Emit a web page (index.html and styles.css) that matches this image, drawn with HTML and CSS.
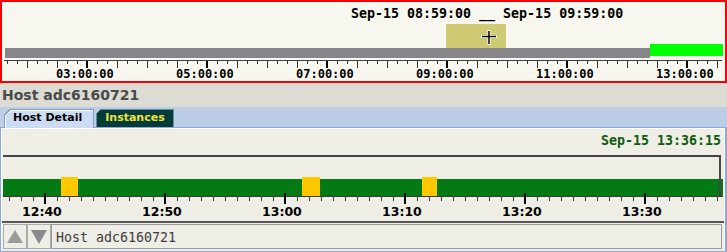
FILE: index.html
```html
<!DOCTYPE html>
<html lang="en">
<head>
    <meta charset="UTF-8">
    <title>Host adc6160721</title>
    <link rel="stylesheet" href="styles.css">
</head>
<body>
    <div class="overview">
        <div class="overview-plot">
            <div class="range">Sep-15 08:59:00 __ Sep-15 09:59:00</div>
            <div class="window"></div>
            <div class="span span-idle"></div>
            <div class="span span-live"></div>
            <svg class="cursor" width="20" height="20" viewBox="0 0 20 20">
                <path d="M1 7.5h16M9 1v15" stroke="#fff" stroke-width="3" fill="none"/>
                <path d="M2 7.5h14M9 2v13" stroke="#000" stroke-width="1.5" fill="none"/>
            </svg>
        </div>
        <div class="ticks ticks-hours"></div>
        <div class="tick-labels hour-labels">
            <span>03:00:00</span>
            <span>05:00:00</span>
            <span>07:00:00</span>
            <span>09:00:00</span>
            <span>11:00:00</span>
            <span>13:00:00</span>
        </div>
    </div>

    <div class="host-title">Host adc6160721</div>

    <div class="tabs">
        <div class="tab tab-active">Host Detail</div>
        <div class="tab tab-instances">Instances</div>
    </div>

    <div class="tab-panel">
        <div class="clock">Sep-15 13:36:15</div>
        <div class="lane">
            <div class="lane-bar"></div>
            <div class="event" style="left:58px; width:17px"></div>
            <div class="event" style="left:299px; width:18px"></div>
            <div class="event" style="left:419px; width:15px"></div>
            <div class="now-line"></div>
        </div>
        <div class="ticks ticks-minutes"></div>
        <div class="tick-labels minute-labels">
            <span>12:40</span>
            <span>12:50</span>
            <span>13:00</span>
            <span>13:10</span>
            <span>13:20</span>
            <span>13:30</span>
        </div>
        <div class="host-nav">
            <button class="nav-btn" type="button">
                <svg width="16" height="13" viewBox="0 0 16 13"><polygon points="8,0 16,13 0,13" fill="#9b9b9b"/></svg>
            </button>
            <button class="nav-btn" type="button">
                <svg width="16" height="14" viewBox="0 0 16 14"><polygon points="0,0 16,0 8,14" fill="#8a8a8a"/></svg>
            </button>
            <div class="host-field">Host adc6160721</div>
        </div>
    </div>
</body>
</html>
```

FILE: styles.css
```css
body {
    margin: 0;
    width: 727px;
    height: 252px;
    overflow: hidden;
    background-color: #dcdcd4;
    font-family: "DejaVu Sans", sans-serif;
}

/* overview strip */
.overview {
    position: relative;
    height: 83px;
    box-sizing: border-box;
    border: 2px solid #ff0000;
    background-color: #f8f7ef;
    overflow: hidden;
}
.overview-plot {
    position: relative;
    height: 58px;
}
.range {
    position: absolute;
    left: 349px;
    top: 4px;
    font: bold 13.3px/16px "DejaVu Sans Mono", monospace;
    color: #000;
    white-space: pre;
}
.window {
    position: absolute;
    left: 444px;
    top: 22px;
    width: 60px;
    height: 24px;
    background-color: #cfca74;
}
.span {
    position: absolute;
}
.span-idle {
    left: 3px;
    top: 46px;
    width: 645px;
    height: 10px;
    background-color: #878589;
}
.span-live {
    left: 648px;
    top: 42px;
    width: 73px;
    height: 12px;
    background-color: #00ff00;
}
.cursor {
    position: absolute;
    left: 478px;
    top: 27px;
}

.ticks-hours {
    margin-left: 2px;
    width: 718px;
    height: 7px;
    border-top: 1px solid #3c3c3c;
    background:
        linear-gradient(90deg, #000 2px, transparent 2px) 82px 0 / 120px 7px repeat-x,
        linear-gradient(90deg, #333 1px, transparent 1px) 23px 0 / 30px 7px repeat-x,
        linear-gradient(90deg, #333 1px, transparent 1px) 3px 0 / 10px 3px repeat-x;
}
.tick-labels {
    display: flex;
    white-space: nowrap;
}
.tick-labels span {
    flex: 0 0 120px;
}
.hour-labels {
    padding-left: 54px;
    font: bold 12px/12px "DejaVu Sans Mono", monospace;
    color: #000;
}

/* host header and tabs */
.host-title {
    height: 24px;
    line-height: 24px;
    padding-left: 2px;
    font-size: 14px;
    font-weight: bold;
    color: #4a4a4a;
}
.tabs {
    display: flex;
    align-items: flex-end;
    height: 20px;
    padding-left: 4px;
    background-color: #bccde6;
}
.tab {
    position: relative;
    border: 1px solid;
    border-bottom: 0;
    font-size: 11px;
    font-weight: bold;
    line-height: 16px;
}
.tab::before {
    content: "";
    position: absolute;
    left: -1px;
    top: -1px;
    width: 7px;
    height: 7px;
}
.tab-active {
    z-index: 1;
    height: 18px;
    margin-bottom: -1px;
    padding: 0 11px 0 8px;
    background-color: #cddcf5;
    border-color: #7f9bcf;
    box-shadow: inset 1px 1px 0 #fff;
    color: #000;
}
.tab-active::before {
    background: linear-gradient(135deg, #bccde6 4.2px, #7f9bcf 4.2px 5.2px, #fff 5.2px 6.2px, transparent 6.2px);
}
.tab-instances {
    height: 17px;
    margin-left: 2px;
    padding: 0 8px;
    background-color: #023c38;
    border-color: #6f8aa0;
    color: #f3e23b;
}
.tab-instances::before {
    background: linear-gradient(135deg, #bccde6 3px, #6f8aa0 3px 4px, transparent 4px);
}

/* tab content */
.tab-panel {
    border: 1px solid #8ea7da;
    border-right-width: 2px;
    padding: 1px 1px 0 1px;
    background-color: #efeee6;
    box-shadow: inset 1px 1px 0 #fff, inset -1px 0 0 #fff;
}
.clock {
    height: 26px;
    box-sizing: border-box;
    padding: 4px 3px 0 0;
    text-align: right;
    font: bold 13.3px/16px "DejaVu Sans Mono", monospace;
    color: #0c5c0c;
}
.lane {
    position: relative;
    height: 39px;
    margin: 0 3px 0 1px;
    border-top: 2px solid #454545;
}
.lane-bar {
    position: absolute;
    left: 0;
    right: -2px;
    top: 22px;
    height: 17px;
    background-color: #047a14;
}
.event {
    position: absolute;
    top: 20px;
    height: 19px;
    background-color: #ffc800;
}
.now-line {
    position: absolute;
    right: 0;
    top: -2px;
    bottom: 0;
    width: 2px;
    background-color: #454545;
}
.ticks-minutes {
    position: relative;
    height: 11px;
    margin: -3px 1px 0 1px;
    background:
        linear-gradient(90deg, #000 2px, transparent 2px) 41px 0 / 120px 11px repeat-x,
        linear-gradient(#3a3a3a, #3a3a3a) 0 3px / 100% 1px no-repeat,
        linear-gradient(90deg, #3a3a3a 1px, transparent 1px) 6px 4px / 12px 4px repeat-x;
}
.minute-labels {
    height: 17px;
    box-sizing: border-box;
    padding: 1px 0 0 20px;
    font: bold 12.5px/14px "DejaVu Sans", sans-serif;
    color: #000;
}

.host-nav {
    display: flex;
    height: 28px;
    border-top: 2px solid #545454;
    padding: 1px 1px 0 1px;
    box-sizing: border-box;
    height: 30px;
}
.nav-btn {
    display: flex;
    align-items: center;
    justify-content: center;
    width: 24px;
    height: 25px;
    padding: 0;
    border: 1px solid #acacac;
    background: transparent;
}
.host-field {
    flex: 1;
    height: 25px;
    box-sizing: border-box;
    margin-right: 1px;
    padding: 3px 0 0 4px;
    border: 1px solid #9c9c9c;
    font: 13.3px/20px "DejaVu Sans Mono", monospace;
    color: #3c3c3c;
}
```
